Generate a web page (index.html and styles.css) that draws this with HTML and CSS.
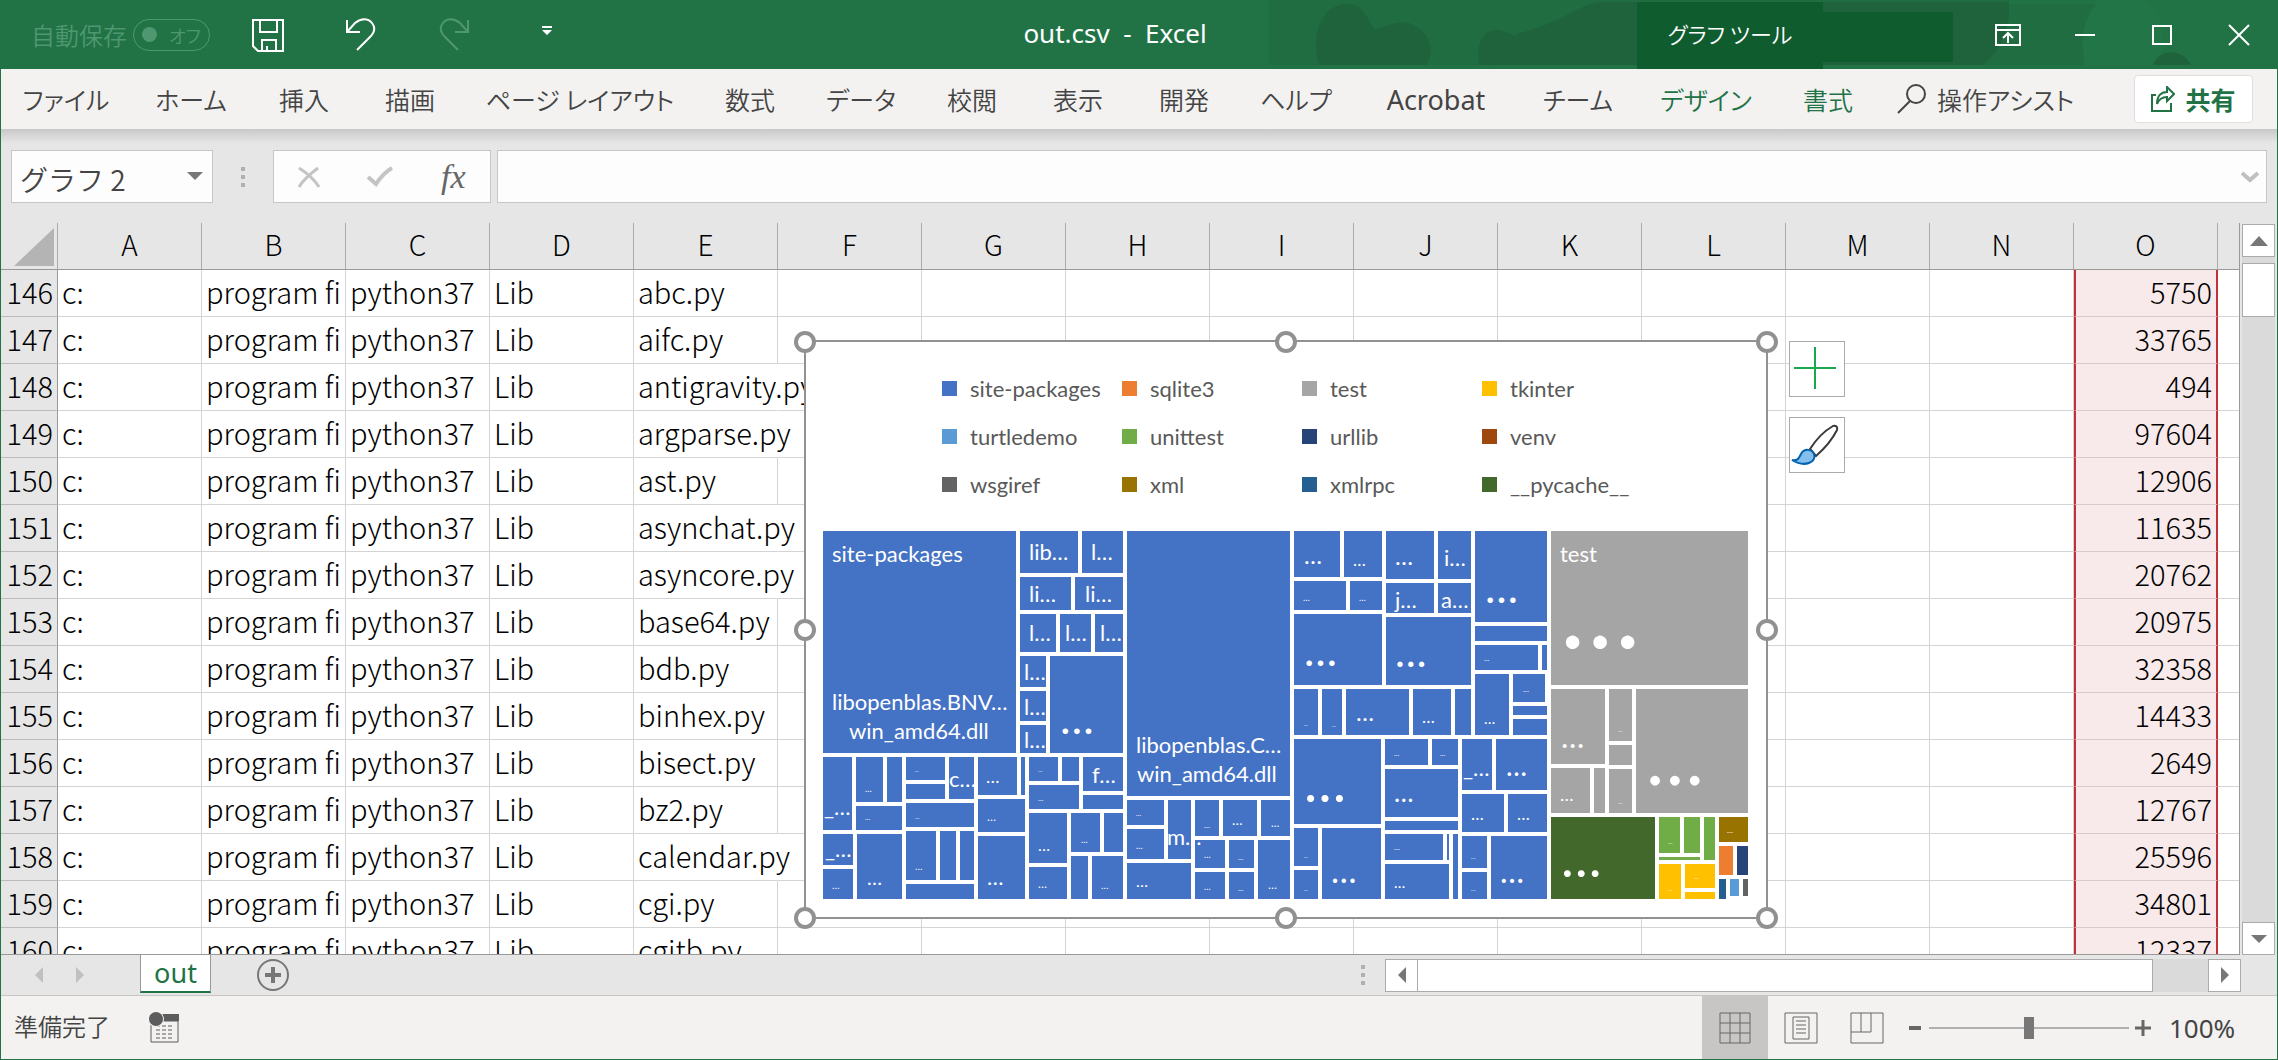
FILE: index.html
```html
<!DOCTYPE html>
<html lang="ja">
<head>
<meta charset="utf-8">
<title>out.csv - Excel</title>
<link rel="stylesheet" href="styles.css">
</head>
<body>
<div class="window">

<header class="titlebar">
<svg class="pattern" width="1018" height="65" viewBox="0 0 1018 65">
<rect x="10" y="0" width="740" height="65" fill="#206d42"/>
<path d="M60 65 C50 30 66 4 88 4 C104 4 108 18 116 30 C128 26 144 18 156 26 C174 36 174 52 168 65 Z" fill="#1e633c"/>
<path d="M220 65 C216 42 226 28 240 30 C262 36 276 46 282 65 Z" fill="#1e633c"/>
<path d="M258 34 C310 20 320 4 342 2 H750 C752 28 742 50 724 65 H230 Z" fill="#1e633c"/>
<path d="M838 1 H888 C908 20 906 44 900 65 H826 C812 44 820 18 838 1 Z" fill="#227547"/>
<path d="M894 65 C900 48 924 48 932 65 Z" fill="#1e633c"/>
<path d="M750 4 H838 C822 20 822 44 826 65 H730 C744 46 752 28 750 4 Z" fill="#206d42"/>
</svg>
<div class="quick">
<label class="autosave"><span class="autosave-name">自動保存</span><span class="switch"><input type="checkbox" disabled>オフ</span></label>
<button class="quick-btn" aria-label="上書き保存"><svg width="32" height="34" viewBox="0 0 32 34" fill="none" stroke="#fff" stroke-width="2"><path d="M1 2H31V33H6L1 28Z"/><path d="M8 2V14H25V2M10 33V22H24V33M15 33V28"/></svg></button>
<button class="quick-btn" aria-label="元に戻す"><svg width="32" height="34" viewBox="0 0 32 34" fill="none" stroke="#fff" stroke-width="2"><path d="M2 2V14H15M2 14L10 5C16 0 23 0 27 5C31 10 29 15 25 19L12 32"/></svg></button>
<button class="quick-btn" aria-label="やり直し"><svg width="32" height="34" viewBox="0 0 32 34" fill="none" stroke="#4f9770" stroke-width="2"><path d="M30 2V14H17M30 14L22 5C16 0 9 0 5 5C1 10 3 15 7 19L20 32"/></svg></button>
<button class="quick-btn" aria-label="カスタマイズ"><svg width="10" height="18" viewBox="0 0 10 18" fill="#fff"><path d="M0 0H10V2H0ZM0 4H10L5 9Z"/></svg></button>
</div>
<h1 class="doc-name">out.csv&nbsp; -&nbsp; Excel</h1>
<div class="context">グラフ ツール</div>
<div class="context-rest"></div>
<div class="window-btns">
<button aria-label="リボンの表示オプション"><svg width="26" height="22" viewBox="0 0 26 22" fill="none" stroke="#fff" stroke-width="2"><path d="M1 1H25V21H1ZM1 6H25M13 19V10M8 14L13 9L18 14"/></svg></button>
<button aria-label="最小化"><svg width="22" height="22" viewBox="0 0 22 22" stroke="#fff" stroke-width="2"><path d="M1 11H21"/></svg></button>
<button aria-label="最大化"><svg width="22" height="22" viewBox="0 0 22 22" fill="none" stroke="#fff" stroke-width="2"><path d="M2 2H20V20H2Z"/></svg></button>
<button aria-label="閉じる"><svg width="22" height="22" viewBox="0 0 22 22" stroke="#fff" stroke-width="2"><path d="M1 1L21 21M21 1L1 21"/></svg></button>
</div>
</header>

<nav class="ribbon">
<div class="tabs">
<button>ファイル</button>
<button>ホーム</button>
<button>挿入</button>
<button>描画</button>
<button>ページ レイアウト</button>
<button>数式</button>
<button>データ</button>
<button>校閲</button>
<button>表示</button>
<button>開発</button>
<button>ヘルプ</button>
<button class="latin">Acrobat</button>
<button>チーム</button>
<button class="green">デザイン</button>
<button class="green">書式</button>
</div>
<button class="assist"><svg width="30" height="32" viewBox="0 0 30 32" fill="none" stroke="#444" stroke-width="2"><circle cx="19" cy="11" r="9"/><path d="M13 18L1 30"/></svg>操作アシスト</button>
<button class="share"><svg width="24" height="26" viewBox="0 0 24 26" fill="none" stroke="#217346" stroke-width="2"><path d="M5 9H1V25H20V17"/><path d="M6 18C6 10 10 6 16 6V1L23 8L16 15V11C11 11 8 13 6 18Z"/></svg>共有</button>
</nav>

<div class="formula-bar">
<div class="name-box"><input type="text" value="グラフ 2" aria-label="名前ボックス"><button aria-label="名前一覧"><svg width="16" height="9" viewBox="0 0 16 9" fill="#777"><path d="M0 0H16L8 8Z"/></svg></button></div>
<span class="grip"></span>
<div class="fx-box">
<button aria-label="キャンセル"><svg width="24" height="22" viewBox="0 0 24 22" fill="none" stroke="#c4c4c4" stroke-width="3"><path d="M2 2C10 7 17 13 22 21M21 2C13 8 6 14 2 21"/></svg></button>
<button aria-label="入力"><svg width="28" height="22" viewBox="0 0 28 22" fill="none" stroke="#c4c4c4" stroke-width="4"><path d="M2 11L10 18C14 12 19 6 26 2"/></svg></button>
<button class="fx" aria-label="関数の挿入">fx</button>
</div>
<div class="formula-box"><input type="text" aria-label="数式バー"><button aria-label="数式バーの展開"><svg width="20" height="12" viewBox="0 0 20 12" fill="none" stroke="#c0c0c0" stroke-width="4"><path d="M2 2L10 9L18 2"/></svg></button></div>
</div>

<main class="sheet">
<div class="grid">
<table>
<colgroup><col class="c-num"><col span="15" class="c-data"><col></colgroup>
<thead>
<tr><th class="all"><svg width="40" height="38" viewBox="0 0 40 38"><path d="M40 0V38H0Z" fill="#b4b4b4"/></svg></th><th>A</th><th>B</th><th>C</th><th>D</th><th>E</th><th>F</th><th>G</th><th>H</th><th>I</th><th>J</th><th>K</th><th>L</th><th>M</th><th>N</th><th>O</th><th></th></tr>
</thead>
<tbody id="rows"></tbody>
</table>

<section class="chart" aria-label="グラフ 2">
<ul class="legend" id="legend"></ul>
<svg class="treemap" id="treemap" width="926" height="368" viewBox="0 0 926 368"></svg>
<i class="handle top left"></i><i class="handle top mid"></i><i class="handle top right"></i>
<i class="handle center left"></i><i class="handle center right"></i>
<i class="handle bottom left"></i><i class="handle bottom mid"></i><i class="handle bottom right"></i>
</section>
<div class="chart-tools">
<button aria-label="グラフ要素"><svg width="54" height="54" viewBox="0 0 54 54" stroke="#1aa84f" stroke-width="2"><path d="M4 26H46M25 5V47"/></svg></button>
<button aria-label="グラフ スタイル"><svg width="54" height="54" viewBox="0 0 54 54" fill="#fff" stroke="#3b3a39" stroke-width="2"><path d="M20 31C27 20 36 12 43 8C46 7 48 9 47 12C43 20 34 31 26 38Z"/><path d="M2 42C8 43 9 40 11 36C14 30 22 31 24 36C27 44 15 50 2 42Z" fill="#83beec" stroke="#0063b1"/></svg></button>
</div>
</div>
<div class="vscroll">
<button aria-label="上へ"><svg width="18" height="10" viewBox="0 0 18 10" fill="#777"><path d="M0 10L9 0L18 10Z"/></svg></button>
<div class="track"><div class="thumb"></div></div>
<button aria-label="下へ"><svg width="16" height="8" viewBox="0 0 16 8" fill="#777"><path d="M0 0H16L8 8Z"/></svg></button>
</div>
</main>

<div class="sheet-tabs">
<button class="arrow" aria-label="前のシート"><svg width="8" height="16" viewBox="0 0 8 16" fill="#c0c0c0"><path d="M8 0V16L0 8Z"/></svg></button>
<button class="arrow" aria-label="次のシート"><svg width="8" height="16" viewBox="0 0 8 16" fill="#c0c0c0"><path d="M0 0V16L8 8Z"/></svg></button>
<button class="sheet-tab">out</button>
<button class="add" aria-label="新しいシート"><svg width="34" height="34" viewBox="0 0 34 34" fill="none" stroke="#777"><circle cx="17" cy="17" r="15" stroke-width="2"/><path d="M9 17H25M17 9V25" stroke-width="4"/></svg></button>
<span class="grip"></span>
<div class="hscroll">
<button aria-label="左へ"><svg width="8" height="16" viewBox="0 0 8 16" fill="#777"><path d="M8 0V16L0 8Z"/></svg></button>
<div class="track"><div class="thumb"></div></div>
<button aria-label="右へ"><svg width="8" height="16" viewBox="0 0 8 16" fill="#777"><path d="M0 0V16L8 8Z"/></svg></button>
</div>
</div>

<footer class="status">
<span class="ready">準備完了</span>
<button class="macro" aria-label="マクロの記録"><svg width="32" height="32" viewBox="0 0 32 32"><path d="M3 9H30V30H3Z" fill="#f3f2f1" stroke="#5c5c5c"/><path d="M14 2H31V9H14Z" fill="#5c5c5c"/><path d="M8 14H26M8 18H26M8 22H26M8 26H26" stroke="#5c5c5c" stroke-dasharray="4 2"/><circle cx="8" cy="7" r="8" fill="#f3f2f1"/><circle cx="8" cy="7" r="7" fill="#5c5c5c"/></svg></button>
<div class="views">
<button class="on" aria-label="標準"><svg width="32" height="32" viewBox="0 0 32 32" fill="none" stroke="#666"><path d="M1 1H31V31H1ZM11 1V31M21 1V31M1 11H31M1 21H31"/></svg></button>
<button aria-label="ページ レイアウト"><svg width="34" height="32" viewBox="0 0 34 32" fill="none" stroke="#666"><path d="M1 1H33V31H1Z"/><path d="M9 5H25V27H9ZM12 9H22M12 13H22M12 17H22M12 21H22"/></svg></button>
<button aria-label="改ページ プレビュー"><svg width="34" height="32" viewBox="0 0 34 32" fill="none" stroke="#666"><path d="M1 1H33V31H1ZM1 20H21V1M11 1V20"/></svg></button>
</div>
<div class="zoom">
<button aria-label="縮小"><svg width="12" height="16" viewBox="0 0 12 16"><path d="M0 8H12" stroke="#666" stroke-width="4"/></svg></button>
<input type="range" min="0" max="100" value="50" aria-label="ズーム">
<button aria-label="拡大"><svg width="16" height="16" viewBox="0 0 16 16"><path d="M0 8H16M8 0V16" stroke="#666" stroke-width="3"/></svg></button>
<span class="percent">100%</span>
</div>
</footer>
</div>
<script src="sheet.js"></script>
</body>
</html>
```
FILE: styles.css
```css
* {
  box-sizing: border-box;
}

body {
  margin: 0;
  font-family: "Noto Sans CJK JP", "Noto Sans", sans-serif;
  font-size: 26px;
  font-weight: 350;
  color: #444;
}

button {
  border: 0;
  padding: 0;
  background: none;
  font: inherit;
  color: inherit;
}

svg {
  display: block;
}

.window {
  display: flex;
  flex-direction: column;
  height: 100vh;
  border: 1px solid #217346;
  border-top: 0;
  background: #e6e6e6;
  overflow: hidden;
}

/* title bar */
.titlebar {
  position: relative;
  display: flex;
  flex: none;
  height: 69px;
  background: #217346;
  color: #fff;
}

.pattern {
  position: absolute;
  top: 0;
  right: 0;
}

.quick {
  position: relative;
  display: flex;
  align-items: center;
  width: 592px;
  padding-left: 30px;
}

.autosave {
  display: flex;
  align-items: center;
  gap: 6px;
  width: 196px;
  margin-right: 2px;
  color: #4f9770;
  font-size: 24px;
  white-space: nowrap;
}

.switch {
  display: flex;
  align-items: center;
  gap: 12px;
  width: 77px;
  height: 32px;
  padding-left: 8px;
  border: 1px solid #4f9770;
  border-radius: 16px;
  font-size: 18px;
  font-feature-settings: "palt";
}

.switch input {
  appearance: none;
  width: 15px;
  height: 15px;
  margin: 0;
  border-radius: 50%;
  background: #4f9770;
}

.quick-btn {
  display: flex;
  flex: none;
  justify-content: center;
  width: 93px;
}

.doc-name {
  position: relative;
  flex: 1;
  margin: 0;
  font: 400 26px/66px "Noto Sans", sans-serif;
  text-align: center;
}

.context {
  position: relative;
  width: 186px;
  margin-top: 2px;
  background: #0f5c2f;
  font-size: 22px;
  line-height: 62px;
  text-align: center;
  font-feature-settings: "palt";
}

.context-rest {
  position: relative;
  width: 130px;
  margin: 12px 16px 7px 0;
  background: #0f5c2f;
}

.window-btns {
  position: relative;
  display: flex;
}

.window-btns button {
  display: flex;
  align-items: center;
  justify-content: center;
  width: 77px;
}

/* ribbon */
.ribbon {
  display: flex;
  flex: none;
  align-items: center;
  height: 60px;
  background: #f3f2f1;
  font-size: 25px;
  font-feature-settings: "palt";
  white-space: nowrap;
}

.tabs {
  display: grid;
  grid-template-columns: 130px 120px 106px 106px 234px 106px 116px 106px 106px 106px 118px 162px 122px 134px 110px;
  align-self: stretch;
}

.latin {
  font: 400 27px "Noto Sans", sans-serif;
}

.green {
  color: #217346;
}

.assist {
  display: flex;
  align-items: center;
  gap: 10px;
  margin-left: 14px;
}

.share {
  display: flex;
  align-items: center;
  justify-content: center;
  gap: 10px;
  width: 119px;
  height: 48px;
  margin: 0 24px 0 auto;
  border: 1px solid #e1dfdd;
  border-radius: 4px;
  background: #fff;
  color: #217346;
  font-weight: 700;
}

/* formula bar */
.formula-bar {
  display: flex;
  flex: none;
  height: 94px;
  padding: 21px 10px 20px;
  background: linear-gradient(#c8c8c8, #e6e6e6 14px);
}

.name-box,
.fx-box,
.formula-box {
  display: flex;
  align-items: center;
  border: 1px solid #c6c6c6;
  background: #fdfdfd;
}

.name-box {
  width: 202px;
  padding-right: 9px;
}

.formula-bar input {
  flex: 1;
  min-width: 0;
  height: 46px;
  padding: 4px 8px 0;
  border: 0;
  background: none;
  font: inherit;
  font-size: 28px;
  color: #444;
}

.grip {
  width: 4px;
  height: 20px;
  background: repeating-linear-gradient(#b0b0b0 0 4px, transparent 4px 8px);
}

.formula-bar .grip {
  align-self: center;
  margin: 0 28px;
}

.fx-box {
  justify-content: space-around;
  width: 218px;
}

.fx {
  width: 28px;
  font: italic 34px/40px "Liberation Serif", serif;
  color: #666;
}

.formula-box {
  flex: 1;
  margin-left: 6px;
  padding-right: 6px;
}

/* cells */
.sheet {
  display: flex;
  flex: 1;
  min-height: 0;
}

.grid {
  position: relative;
  flex: 1;
  min-width: 0;
  overflow: hidden;
  border-right: 1px solid #999;
  border-bottom: 1px solid #999;
  background: #fff;
}

table {
  width: 100%;
  table-layout: fixed;
  border-collapse: separate;
  border-spacing: 0;
  font-size: 29px;
  font-weight: 300;
  line-height: 42px;
  color: #000;
}

.c-num {
  width: 57px;
}

.c-data {
  width: 144px;
}

th {
  height: 47px;
  padding: 0;
  border-right: 1px solid #aaa;
  border-bottom: 1px solid #999;
  background: #e6e6e6;
  font-weight: 300;
  vertical-align: top;
}

thead th {
  font-size: 28px;
}

thead th:last-child {
  border-right: 0;
}

.all svg {
  margin: 5px 0 0 13px;
}

tbody th {
  padding-right: 4px;
  border-right-color: #999;
  border-bottom-color: #bbb;
  text-align: right;
}

td {
  height: 47px;
  padding: 0 4px;
  border-right: 1px solid #d4d4d4;
  border-bottom: 1px solid #d4d4d4;
  overflow: hidden;
  white-space: nowrap;
  vertical-align: top;
}

td.spill {
  overflow: visible;
  border-right-color: #fff;
}

td.size {
  border-left: 2px solid #c0313a;
  border-right: 2px solid #c0313a;
  border-bottom-color: #d9c9ca;
  background: #f8e9ea;
  text-align: right;
}

td:last-child {
  border-right: 0;
}

/* chart laid over the cells */
.chart {
  position: absolute;
  top: 117px;
  left: 803px;
  width: 964px;
  height: 579px;
  padding: 22px 17px;
  border: 2px solid #919191;
  background: #fff;
  font-family: Lato, sans-serif;
  font-weight: 400;
}

.legend {
  display: grid;
  grid-template-columns: repeat(4, 180px);
  grid-auto-rows: 48px;
  align-items: center;
  margin: 0 0 23px 119px;
  padding: 0;
  list-style: none;
  font-size: 22px;
  color: #595959;
}

.legend li {
  display: flex;
  align-items: center;
  gap: 13px;
}

.swatch {
  width: 15px;
  height: 15px;
}

.treemap {
  fill: #fff;
}

.blue { fill: #4472c4; background: #4472c4; }
.orange { fill: #ed7d31; background: #ed7d31; }
.gray { fill: #a5a5a5; background: #a5a5a5; }
.yellow { fill: #ffc000; background: #ffc000; }
.sky { fill: #5b9bd5; background: #5b9bd5; }
.leaf { fill: #70ad47; background: #70ad47; }
.navy { fill: #264478; background: #264478; }
.rust { fill: #9e480e; background: #9e480e; }
.ash { fill: #636363; background: #636363; }
.ochre { fill: #997300; background: #997300; }
.steel { fill: #255e91; background: #255e91; }
.moss { fill: #43682b; background: #43682b; }

.handle {
  position: absolute;
  width: 22px;
  height: 22px;
  border: 4px solid #919191;
  border-radius: 50%;
  background: #fff;
}

.top { top: -11px; }
.center { top: 277px; }
.bottom { bottom: -12px; }
.left { left: -12px; }
.mid { left: 469px; }
.right { right: -12px; }

.chart-tools {
  position: absolute;
  top: 118px;
  left: 1788px;
  display: grid;
  gap: 20px;
}

.chart-tools button {
  width: 56px;
  height: 56px;
  border: 1px solid #ababab;
  background: #fff;
}

/* scroll bars */
.vscroll {
  display: flex;
  flex-direction: column;
  width: 37px;
  padding: 1px 2px 0 2px;
}

.hscroll {
  display: flex;
  width: 856px;
  height: 33px;
  margin-right: 36px;
}

.vscroll button,
.hscroll button {
  display: flex;
  flex: none;
  align-items: center;
  justify-content: center;
  width: 33px;
  height: 33px;
  border: 1px solid #ababab;
  background: #fff;
}

.track {
  flex: 1;
  background: #dadada;
}

.thumb {
  border: 1px solid #ababab;
  background: #fff;
}

.vscroll .thumb {
  height: 54px;
  margin-top: 6px;
}

.hscroll .thumb {
  width: 93%;
  height: 33px;
  border-left: 0;
}

/* sheet tabs */
.sheet-tabs {
  display: flex;
  flex: none;
  align-items: center;
  height: 41px;
  padding-left: 17px;
  border-bottom: 1px solid #c6c6c6;
}

.arrow {
  display: flex;
  justify-content: center;
  width: 41px;
}

.sheet-tab {
  align-self: flex-start;
  width: 71px;
  height: 38px;
  margin-left: 40px;
  border: 1px solid #999;
  border-top: 0;
  border-bottom: 2px solid #217346;
  background: #fff;
  color: #217346;
  font: 400 27px/34px "Noto Sans", sans-serif;
}

.add {
  margin-left: 45px;
}

.sheet-tabs .grip {
  margin: 0 20px 0 auto;
}

/* status bar */
.status {
  display: flex;
  flex: none;
  align-items: center;
  height: 63px;
  padding-left: 13px;
  background: #f3f2f1;
  font-size: 24px;
}

.ready {
  line-height: 60px;
  align-self: flex-start;
}

.macro {
  margin-left: 38px;
}

.views {
  display: flex;
  align-self: stretch;
  margin-left: auto;
}

.views button {
  display: flex;
  align-items: center;
  justify-content: center;
  width: 66px;
}

.views .on {
  background: #c8c6c4;
}

.zoom {
  display: flex;
  align-items: center;
  width: 377px;
  padding-left: 9px;
}

.zoom input {
  appearance: none;
  width: 200px;
  height: 22px;
  margin: 0 6px 0 8px;
  background: linear-gradient(#b0b0b0, #b0b0b0) center / 100% 2px no-repeat;
}

.zoom input::-webkit-slider-thumb {
  appearance: none;
  width: 10px;
  height: 22px;
  background: #777;
}

.percent {
  margin-left: 18px;
  font: 400 26px/34px "Noto Sans", sans-serif;
}
```
FILE: sheet.js
```js
var files = [
["abc.py", 5750], ["aifc.py", 33765], ["antigravity.py", 494], ["argparse.py", 97604],
["ast.py", 12906], ["asynchat.py", 11635], ["asyncore.py", 20762], ["base64.py", 20975],
["bdb.py", 32358], ["binhex.py", 14433], ["bisect.py", 2649], ["bz2.py", 12767],
["calendar.py", 25596], ["cgi.py", 34801], ["cgitb.py", 12337]
];

var html = "";
files.forEach(function(file, i) {
var spill = file[0].length > 9 ? ' class="spill"' : "";
html += "<tr><th>" + (146 + i) + "</th><td>c:</td><td>program fi</td><td>python37</td><td>Lib</td>";
html += "<td" + spill + ">" + file[0] + "</td>";
for (var c = 0; c < 9; c++) html += "<td></td>";
html += '<td class="size">' + file[1] + "</td><td></td></tr>";
});
document.getElementById("rows").innerHTML = html;

var legend = [
["blue", "site-packages"], ["orange", "sqlite3"], ["gray", "test"], ["yellow", "tkinter"],
["sky", "turtledemo"], ["leaf", "unittest"], ["navy", "urllib"], ["rust", "venv"],
["ash", "wsgiref"], ["ochre", "xml"], ["steel", "xmlrpc"], ["moss", "__pycache__"]
];
document.getElementById("legend").innerHTML = legend.map(function(item) {
return '<li><span class="swatch ' + item[0] + '"></span>' + item[1] + "</li>";
}).join("");

// left, top, right, bottom of each tile
var tiles = {
blue: [
[0,0,193,222],[197,0,255,42],[259,0,300,42],[197,46,248,79],[252,46,300,79],
[197,83,233,121],[237,83,268,121],[272,83,300,121],[197,125,223,156],[227,125,300,222],
[197,160,223,190],[197,194,223,222],[0,226,29,299],[33,226,60,271],[64,226,79,271],
[83,226,122,249],[83,253,122,268],[126,226,151,268],[155,226,194,264],[198,226,202,264],
[206,226,235,250],[239,226,256,250],[260,226,300,260],[33,275,79,299],[83,272,151,296],
[155,268,202,301],[206,254,256,278],[260,264,300,278],[0,303,30,334],[0,338,30,368],
[34,303,79,368],[83,300,113,349],[117,300,133,349],[137,300,151,349],[83,353,151,368],
[155,305,202,368],[206,282,244,332],[206,336,244,368],[248,282,277,321],[281,282,300,321],
[248,325,265,368],[269,325,300,368],
[304,0,467,265],[471,0,517,46],[521,0,559,46],[563,0,611,48],[615,0,648,48],
[471,50,523,79],[527,50,559,79],[563,52,611,82],[615,52,648,82],[471,83,559,154],
[563,86,648,154],[471,158,495,204],[499,158,519,204],[523,158,586,204],[590,158,628,204],
[632,158,648,204],[471,208,558,293],[562,208,605,234],[609,208,635,234],[562,238,635,286],
[562,290,635,299],[562,303,620,329],[624,303,626,329],[630,303,635,368],[562,333,626,368],
[471,297,495,335],[471,339,495,368],[499,297,558,368],[304,269,341,294],[304,298,341,328],
[345,269,368,328],[372,269,396,305],[400,269,434,305],[438,269,467,305],[304,332,368,368],
[372,309,402,337],[406,309,431,337],[435,309,467,368],[372,341,402,368],[406,341,431,368],
[652,0,724,91],[652,95,724,110],[652,114,715,139],[719,114,724,139],[652,143,686,204],
[690,143,722,171],[690,175,724,184],[690,188,724,204],[639,208,669,259],[673,208,724,259],
[639,263,681,301],[685,263,724,301],[639,305,664,337],[639,341,664,368],[668,305,724,368]
],
gray: [
[728,0,925,154],[728,158,782,233],[786,158,809,210],[786,214,809,234],[786,238,809,282],
[813,158,925,282],[728,237,767,282],[771,237,782,282]
],
moss: [[728,286,832,368]],
leaf: [[836,286,857,322],[861,286,877,322],[881,286,892,329],[836,326,877,329]],
yellow: [[836,333,858,368],[862,333,892,357],[862,361,892,368]],
ochre: [[896,286,925,311]],
orange: [[896,315,910,344]],
navy: [[914,315,925,344]],
steel: [[896,348,903,368]],
sky: [[907,348,916,365]],
ash: [[920,348,925,365]]
};

// x, baseline, text
var names = [
[9,31,"site-packages"],[9,179,"libopenblas.BNV…"],[26,208,"win_amd64.dll"],
[313,222,"libopenblas.C…"],[314,251,"win_amd64.dll"],[737,31,"test"],
[206,29,"lib…"],[268,29,"l…"],[206,71,"li…"],[262,71,"li…"],[206,110,"l…"],[242,110,"l…"],
[277,110,"l…"],[201,149,"l…"],[201,184,"l…"],[201,217,"l…"],[126,256,"c…"],[269,252,"f…"],
[1,284,"_…"],[2,326,"_…"],[344,314,"m…"],[621,35,"i…"],[572,77,"j…"],[618,77,"a…"],[640,245,"_…"]
];

// x, baseline, font size of the labels cut down to dots
var dots = [
[237,203,45],[163,252,18],[42,261,9],[42,289,7],[92,241,5],[92,288,6],[164,290,12],[215,241,6],
[215,270,7],[9,358,10],[44,354,20],[92,339,10],[164,354,22],[215,320,16],[215,357,12],[258,312,9],
[278,358,10],[481,33,24],[530,35,17],[480,70,9],[536,70,9],[572,34,24],[481,135,44],[572,136,42],
[481,195,5],[509,196,5],[533,190,24],[599,192,17],[481,271,56],[571,225,7],[617,225,7],[571,271,26],
[571,319,8],[571,357,15],[481,327,5],[481,360,5],[508,352,34],[313,285,7],[313,318,9],[381,297,8],
[409,294,14],[448,296,11],[313,356,16],[381,327,9],[415,329,7],[445,358,12],[381,359,9],[415,360,7],
[662,72,44],[661,130,7],[661,193,15],[700,161,8],[683,245,28],[648,289,17],[694,289,17],[648,328,6],
[648,360,6],[677,352,32],[737,117,107],[738,217,31],[795,201,6],[795,273,6],[737,270,18],[823,254,77],
[738,346,54],[845,313,6],[845,360,6],[871,348,6],[904,302,8]
];

var svg = "";
for (var color in tiles) {
tiles[color].forEach(function(t) {
svg += '<rect class="' + color + '" x="' + t[0] + '" y="' + t[1] + '" width="' + (t[2] - t[0]) + '" height="' + (t[3] - t[1]) + '"/>';
});
}
names.forEach(function(n) {
svg += '<text x="' + n[0] + '" y="' + n[1] + '" font-size="22">' + n[2] + "</text>";
});
dots.forEach(function(d) {
svg += '<text x="' + d[0] + '" y="' + d[1] + '" font-size="' + d[2] + '">…</text>';
});
document.getElementById("treemap").innerHTML = svg;
```
